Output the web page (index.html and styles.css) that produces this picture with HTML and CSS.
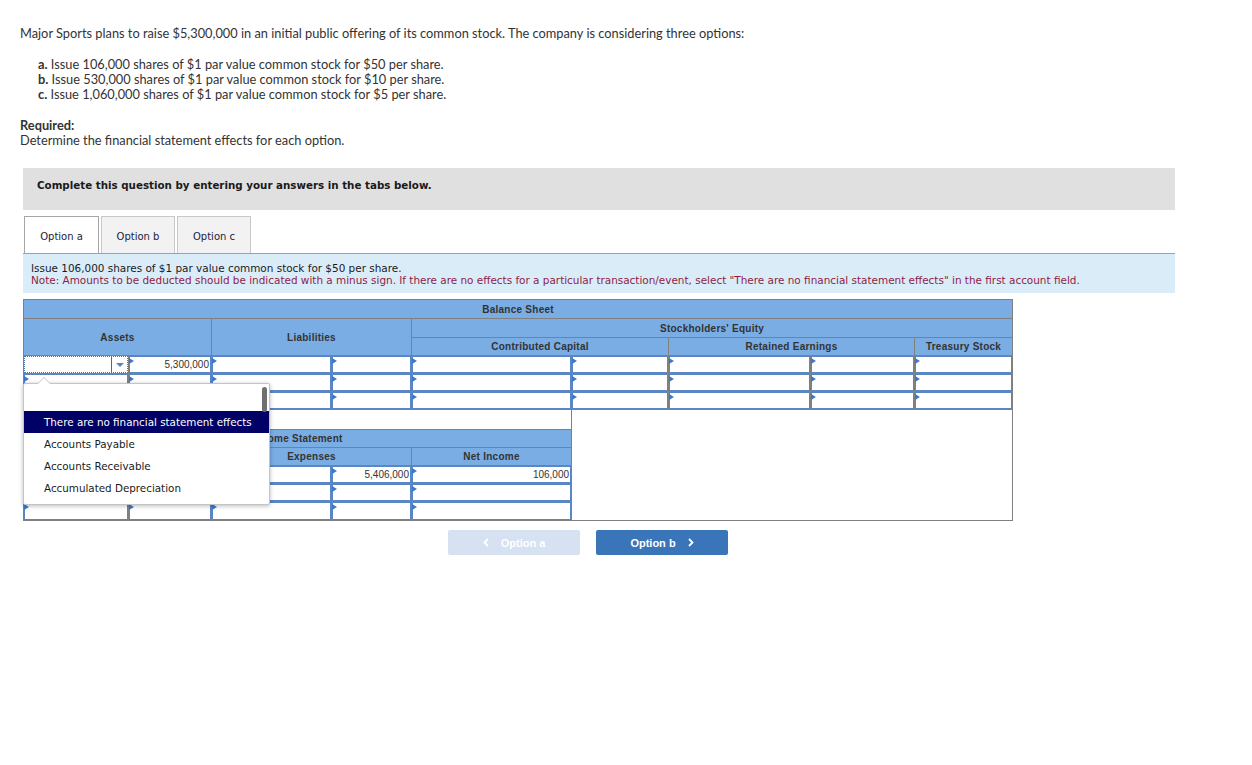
FILE: index.html
```html
<!DOCTYPE html>
<html lang="en">
<head>
<meta charset="utf-8">
<title>Major Sports</title>
<link rel="stylesheet" href="styles.css">
</head>
<body>
<div class="page">
  <div class="intro">
    <p class="lead">Major Sports plans to raise $5,300,000 in an initial public offering of its common stock. The company is considering three options:</p>
    <ul class="opts">
      <li><b>a.</b> Issue 106,000 shares of $1 par value common stock for $50 per share.</li>
      <li><b>b.</b> Issue 530,000 shares of $1 par value common stock for $10 per share.</li>
      <li><b>c.</b> Issue 1,060,000 shares of $1 par value common stock for $5 per share.</li>
    </ul>
    <p class="req"><b>Required:</b><br>Determine the financial statement effects for each option.</p>
  </div>

  <div class="work">
    <div class="banner">Complete this question by entering your answers in the tabs below.</div>

    <div class="tabs">
      <div class="tab tab-a active">Option a</div>
      <div class="tab tab-b">Option b</div>
      <div class="tab tab-c">Option c</div>
    </div>

    <div class="info">
      <div class="info-line">Issue 106,000 shares of $1 par value common stock for $50 per share.</div>
      <div class="info-line note">Note: Amounts to be deducted should be indicated with a minus sign. If there are no effects for a particular transaction/event, select "There are no financial statement effects" in the first account field.</div>
    </div>

    <div class="sheet">
      <table class="grid bs">
        <colgroup>
          <col class="w105"><col class="w83"><col class="w120"><col class="w80"><col class="w160"><col class="w97"><col class="w142"><col class="w104"><col class="w98">
        </colgroup>
        <tr class="h1"><th colspan="9">Balance Sheet</th></tr>
        <tr class="h2"><th colspan="2" rowspan="2">Assets</th><th colspan="2" rowspan="2">Liabilities</th><th colspan="5">Stockholders' Equity</th></tr>
        <tr class="h3"><th colspan="2">Contributed Capital</th><th colspan="2">Retained Earnings</th><th>Treasury Stock</th></tr>
        <tr class="d">
          <td><div class="sel"><span class="sel-fill"></span><span class="sel-btn"><span class="sel-arrow"></span></span></div></td>
          <td><div class="in num">5,300,000</div></td>
          <td><div class="in"></div></td><td><div class="in"></div></td>
          <td><div class="in"></div></td><td><div class="in"></div></td>
          <td><div class="in"></div></td><td><div class="in"></div></td>
          <td><div class="in"></div></td>
        </tr>
        <tr class="d">
          <td><div class="in"></div></td><td><div class="in"></div></td>
          <td><div class="in"></div></td><td><div class="in"></div></td>
          <td><div class="in"></div></td><td><div class="in"></div></td>
          <td><div class="in"></div></td><td><div class="in"></div></td>
          <td><div class="in"></div></td>
        </tr>
        <tr class="d">
          <td><div class="in"></div></td><td><div class="in"></div></td>
          <td><div class="in"></div></td><td><div class="in"></div></td>
          <td><div class="in"></div></td><td><div class="in"></div></td>
          <td><div class="in"></div></td><td><div class="in"></div></td>
          <td><div class="in"></div></td>
        </tr>
      </table>

      <div class="lower">
        <div class="isbox">
          <div class="is-gap"></div>
          <table class="grid is">
            <colgroup>
              <col class="w105"><col class="w83"><col class="w120"><col class="w80"><col class="w159">
            </colgroup>
            <tr class="h1"><th colspan="5">Income Statement</th></tr>
            <tr class="h1"><th colspan="2">Revenues</th><th colspan="2">Expenses</th><th>Net Income</th></tr>
            <tr class="d">
              <td><div class="in"></div></td><td><div class="in"></div></td>
              <td><div class="in"></div></td><td><div class="in num">5,406,000</div></td>
              <td><div class="in num">106,000</div></td>
            </tr>
            <tr class="d">
              <td><div class="in"></div></td><td><div class="in"></div></td>
              <td><div class="in"></div></td><td><div class="in"></div></td>
              <td><div class="in"></div></td>
            </tr>
            <tr class="d last">
              <td><div class="in"></div></td><td><div class="in"></div></td>
              <td><div class="in"></div></td><td><div class="in"></div></td>
              <td><div class="in"></div></td>
            </tr>
          </table>
        </div>
        <div class="lower-fill"></div>
      </div>

      <div class="dropdown">
        <div class="dd-blank"></div>
        <div class="dd-item selected">There are no financial statement effects</div>
        <div class="dd-item">Accounts Payable</div>
        <div class="dd-item">Accounts Receivable</div>
        <div class="dd-item">Accumulated Depreciation</div>
        <div class="dd-thumb"></div>
      </div>
    </div>

    <div class="nav">
      <div class="btn disabled">
        <svg class="chev" width="6" height="9" viewBox="0 0 6 9"><path d="M5 1 L1.5 4.5 L5 8" fill="none" stroke="#ffffff" stroke-width="1.8"/></svg>
        <span>Option a</span>
      </div>
      <div class="btn primary">
        <span>Option b</span>
        <svg class="chev" width="6" height="9" viewBox="0 0 6 9"><path d="M1 1 L4.5 4.5 L1 8" fill="none" stroke="#ffffff" stroke-width="1.8"/></svg>
      </div>
    </div>
  </div>
</div>
</body>
</html>
```

FILE: styles.css
```css
* { box-sizing: border-box; }

html, body {
  margin: 0;
  padding: 0;
  background: #ffffff;
}

.page {
  padding-top: 25px;
  color: #333333;
  font-family: Lato, "Liberation Sans", sans-serif;
}

/* ---------- intro ---------- */
.intro {
  padding-left: 20px;
  font-size: 12.8px;
}

.lead {
  margin: 0;
  line-height: 16px;
}

.opts {
  list-style: none;
  margin: 15.5px 0 0 0;
  padding: 0 0 0 18px;
  line-height: 15px;
}

.opts b { font-weight: 700; }

.req {
  margin: 16px 0 0 0;
  line-height: 15px;
}

/* ---------- work area ---------- */
.work {
  margin-left: 23px;
  width: 1152px;
  margin-top: 20.5px;
}

.banner {
  height: 42px;
  background: #e0e0e0;
  padding: 11px 0 0 14px;
  font-family: "DejaVu Sans", Verdana, sans-serif;
  font-weight: 700;
  font-size: 10.3px;
  line-height: 13px;
  color: #1a1a1a;
}

.tabs {
  display: flex;
  gap: 2px;
  margin-top: 6px;
  padding-left: 1px;
  border-bottom: 1px solid #a0a0a0;
}

.tab {
  height: 37px;
  border: 1px solid #c8c8c8;
  border-bottom: none;
  background: #f2f2f2;
  font-family: "DejaVu Sans", Verdana, sans-serif;
  font-size: 10px;
  color: #1c1c3a;
  display: flex;
  align-items: center;
  justify-content: center;
  padding-top: 3px;
}

.tab-a { width: 75px; }
.tab-b { width: 74px; }
.tab-c { width: 74px; }

.tab.active {
  background: #ffffff;
  border-color: #a6a6a6;
}

.info {
  height: 39px;
  background: #dbecf9;
  padding: 8px 0 0 8px;
  font-family: "DejaVu Sans", Verdana, sans-serif;
  font-size: 10.45px;
  line-height: 12px;
  color: #1a1a1a;
  margin-bottom: 6px;
}

.note { color: #8e1c45; }

/* ---------- sheet ---------- */
.sheet {
  position: relative;
  width: 990px;
}

.grid {
  border-collapse: separate;
  border-spacing: 0;
  table-layout: fixed;
  font-family: "Liberation Sans", Arial, sans-serif;
}

.bs {
  width: 990px;
  border-top: 1px solid #808080;
  border-left: 1px solid #808080;
}

.is {
  width: 547px;
}

.w105 { width: 105px; }
.w83 { width: 83px; }
.w120 { width: 120px; }
.w80 { width: 80px; }
.w160 { width: 160px; }
.w159 { width: 159px; }
.w97 { width: 97px; }
.w142 { width: 142px; }
.w104 { width: 104px; }
.w98 { width: 98px; }

.grid th {
  background: #79ade4;
  color: #333333;
  font-weight: 700;
  font-size: 10px;
  letter-spacing: 0.25px;
  border-right: 1px solid #808080;
  border-bottom: 1px solid #808080;
  padding: 0;
  text-align: center;
  vertical-align: middle;
  line-height: 12px;
}

.bs th { padding-top: 1px; }

.bs .h1 th { height: 19px; }
.bs .h2 th { height: 19px; }
.bs .h3 th { height: 18px; }
.is .h1 th { height: 18px; }

.grid td {
  padding: 0;
  height: 18px;
  border-right: 1px solid #808080;
  border-bottom: 1px solid #808080;
  background: #ffffff;
}

.is th:last-child,
.is td:last-child { border-right: none; }

.is .last td { border-bottom: none; height: 18px; }

.in {
  position: relative;
  height: 17px;
  border: 1px solid #5a86c4;
  background: #ffffff;
  font-size: 10px;
  line-height: 14px;
  padding-top: 1px;
  color: #333333;
}

.is .last .in { height: 18px; }

.in::before {
  content: "";
  position: absolute;
  left: -1px;
  top: 1px;
  border-left: 5px solid #3a78d0;
  border-top: 3px solid transparent;
  border-bottom: 3px solid transparent;
}

.num {
  text-align: right;
  padding-right: 1px;
}

.sel {
  display: flex;
  height: 17px;
  border: 1px dotted #4a76b0;
  background: #ffffff;
}

.sel-fill { flex: 1; }

.sel-btn {
  width: 16px;
  border-left: 1px solid #3f6db0;
  display: flex;
  align-items: center;
  justify-content: center;
}

.sel-arrow {
  width: 0;
  height: 0;
  border-left: 4px solid transparent;
  border-right: 4px solid transparent;
  border-top: 4px solid #5a84bd;
  margin-top: 1px;
}

.lower {
  display: flex;
  width: 990px;
  border-left: 1px solid #808080;
  border-right: 1px solid #808080;
  border-bottom: 1px solid #808080;
}

.isbox {
  width: 548px;
  border-right: 1px solid #808080;
}

.is-gap {
  height: 20px;
  border-bottom: 1px solid #808080;
}

.lower-fill { flex: 1; }

/* ---------- dropdown ---------- */
.dropdown {
  position: absolute;
  left: 0;
  top: 84px;
  width: 247px;
  height: 122px;
  background: #ffffff;
  border: 1px solid #c4c4c4;
  border-radius: 2px;
  box-shadow: 0 1px 4px rgba(0, 0, 0, 0.28);
  font-family: "DejaVu Sans", Verdana, sans-serif;
  font-size: 10.35px;
  color: #1a1a1a;
}

.dropdown::before {
  content: "";
  position: absolute;
  left: 13px;
  top: -7px;
  border-left: 7px solid transparent;
  border-right: 7px solid transparent;
  border-bottom: 7px solid #c4c4c4;
}

.dropdown::after {
  content: "";
  position: absolute;
  left: 14px;
  top: -6px;
  border-left: 6px solid transparent;
  border-right: 6px solid transparent;
  border-bottom: 6px solid #ffffff;
}

.dd-blank { height: 27px; }

.dd-item {
  height: 22px;
  line-height: 22px;
  padding-left: 20px;
  white-space: nowrap;
}

.dd-item.selected {
  background: #000066;
  color: #ffffff;
}

.dd-thumb {
  position: absolute;
  right: 2px;
  top: 3px;
  width: 5px;
  height: 25px;
  border-radius: 3px;
  background: #707070;
}

/* ---------- nav ---------- */
.nav {
  display: flex;
  gap: 16px;
  margin-top: 9px;
  padding-left: 425px;
}

.btn {
  width: 132px;
  height: 25px;
  border-radius: 2px;
  display: flex;
  align-items: center;
  justify-content: center;
  gap: 12px;
  font-family: "Liberation Sans", Arial, sans-serif;
  font-weight: 700;
  font-size: 11px;
  color: #ffffff;
}

.btn.disabled { background: #d6e2f1; }
.btn.primary { background: #3a74b9; }

.chev { display: block; }
```
